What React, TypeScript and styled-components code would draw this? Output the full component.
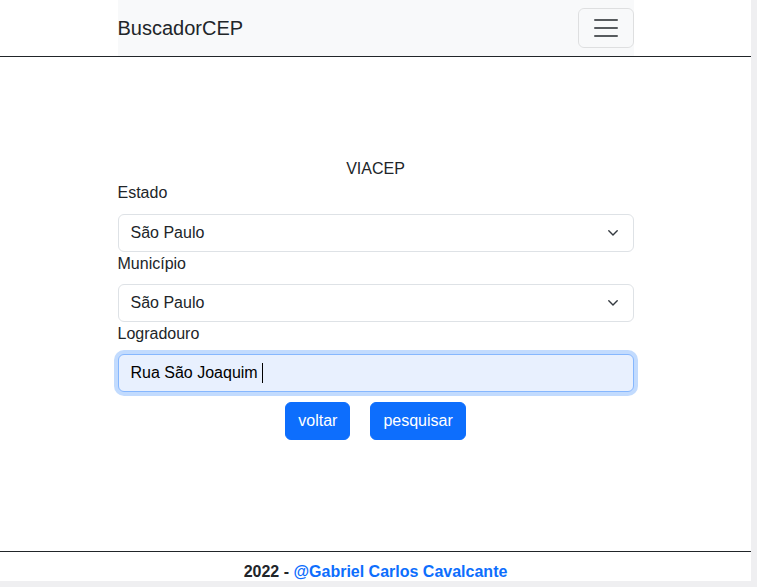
import React from "react";
import styled, { createGlobalStyle } from "styled-components";

const Global = createGlobalStyle`
  html, body { margin: 0; padding: 0; background: #efeff1; }
  body {
    font-family: "Liberation Sans", Arial, sans-serif;
    font-size: 16px;
    line-height: 24px;
    color: #212529;
  }
  * { box-sizing: border-box; }
`;

const Page = styled.div`
  width: 751px;
  height: 581px;
  overflow: hidden;
  background: #fff;
  display: flex;
  flex-direction: column;
`;

const NavOuter = styled.header`
  flex-shrink: 0;
  display: flex;
  justify-content: center;
  border-bottom: 1px solid #212529;
`;

const NavBar = styled.nav`
  width: 516px;
  height: 56px;
  background: #f8f9fa;
  display: flex;
  align-items: center;
  justify-content: space-between;
`;

const Brand = styled.a`
  font-size: 20px;
  line-height: 30px;
  color: #212529;
  text-decoration: none;
`;

const Toggler = styled.button`
  width: 56px;
  height: 40px;
  padding: 4px 12px;
  border: 1px solid rgba(0, 0, 0, 0.1);
  border-radius: 6px;
  background: transparent;
  display: flex;
  align-items: center;
  justify-content: center;
`;

const Main = styled.main`
  flex-shrink: 0;
  height: 494px;
  padding-top: 100px;
  display: flex;
  justify-content: center;
`;

const Form = styled.form`
  width: 516px;
  display: flex;
  flex-direction: column;
`;

const Title = styled.div`
  text-align: center;
  line-height: 24px;
`;

const Label = styled.label<{ $gap?: number }>`
  display: block;
  line-height: 24px;
  margin-bottom: ${(p) => p.$gap ?? 8}px;
`;

const FieldWrap = styled.div`
  position: relative;
  height: 38px;
`;

const Select = styled.select`
  width: 100%;
  height: 38px;
  appearance: none;
  -webkit-appearance: none;
  padding: 6px 36px 6px 12px;
  font-family: "Liberation Sans", Arial, sans-serif;
  font-size: 16px;
  line-height: 24px;
  color: #212529;
  background: #fff;
  border: 1px solid #dee2e6;
  border-radius: 6px;
`;

const Chevron = styled.svg`
  position: absolute;
  right: 16px;
  top: 16px;
  width: 10px;
  height: 6px;
  pointer-events: none;
`;

const Input = styled.input`
  width: 100%;
  height: 38px;
  padding: 6px 12px;
  font-family: "Liberation Sans", Arial, sans-serif;
  font-size: 16px;
  line-height: 24px;
  color: #000;
  background: #e8f0fe;
  border: 1px solid #86b7fe;
  border-radius: 6px;
  box-shadow: 0 0 0 4px rgba(13, 110, 253, 0.25);
  outline: none;
  caret-color: transparent;
`;

const Caret = styled.span`
  position: absolute;
  left: 144px;
  top: 9px;
  width: 1px;
  height: 20px;
  background: #000;
  pointer-events: none;
`;

const Buttons = styled.div`
  display: flex;
  justify-content: center;
  gap: 20px;
  margin-top: 10px;
`;

const Button = styled.button`
  height: 38px;
  padding: 6px 12px;
  font-family: "Liberation Sans", Arial, sans-serif;
  font-size: 16px;
  line-height: 24px;
  color: #fff;
  background: #0d6efd;
  border: 1px solid #0d6efd;
  border-radius: 6px;
`;

const Footer = styled.footer`
  flex-shrink: 0;
  border-top: 1px solid #212529;
  padding-top: 8px;
  text-align: center;
  font-weight: 700;
  line-height: 24px;
`;

const Link = styled.a`
  color: #0d6efd;
  text-decoration: none;
`;

const ChevronIcon = () => (
  <Chevron viewBox="0 0 10 6">
    <path d="M0.8 0.8 5 5 9.2 0.8" fill="none" stroke="#343a40" strokeWidth="1.4" strokeLinecap="round" strokeLinejoin="round" />
  </Chevron>
);

export default function App() {
  return (
    <>
      <Global />
      <Page>
        <NavOuter>
          <NavBar>
            <Brand href="#">BuscadorCEP</Brand>
            <Toggler type="button" aria-label="menu">
              <svg width="30" height="30" viewBox="0 0 30 30">
                <path d="M4 7h22M4 15h22M4 23h22" stroke="rgba(33,37,41,0.75)" strokeWidth="2" strokeLinecap="round" />
              </svg>
            </Toggler>
          </NavBar>
        </NavOuter>
        <Main>
          <Form onSubmit={(e) => e.preventDefault()}>
            <Title>VIACEP</Title>
            <Label $gap={9}>Estado</Label>
            <FieldWrap>
              <Select defaultValue="SP">
                <option value="SP">São Paulo</option>
              </Select>
              <ChevronIcon />
            </FieldWrap>
            <Label>Município</Label>
            <FieldWrap>
              <Select defaultValue="SP">
                <option value="SP">São Paulo</option>
              </Select>
              <ChevronIcon />
            </FieldWrap>
            <Label>Logradouro</Label>
            <FieldWrap>
              <Input defaultValue="Rua São Joaquim " />
              <Caret />
            </FieldWrap>
            <Buttons>
              <Button type="button">voltar</Button>
              <Button type="submit">pesquisar</Button>
            </Buttons>
          </Form>
        </Main>
        <Footer>
          2022 - <Link href="#">@Gabriel Carlos Cavalcante</Link>
        </Footer>
      </Page>
    </>
  );
}
